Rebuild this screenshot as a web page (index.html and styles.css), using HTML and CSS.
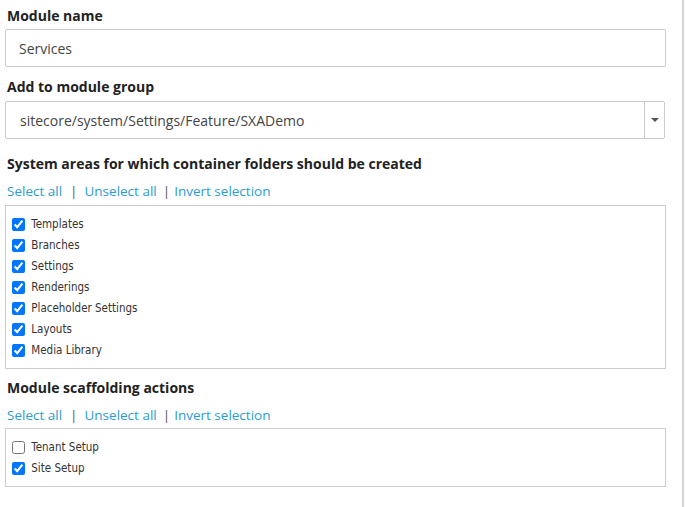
FILE: index.html
```html
<!DOCTYPE html>
<html lang="en">
<head>
    <meta charset="UTF-8">
    <meta name="viewport" content="width=device-width, initial-scale=1.0">
    <title>Create module</title>
    <link rel="stylesheet" href="styles.css">
</head>
<body>
    <div class="page">
        <div class="form">
            <label class="field-label" for="module_name">Module name</label>
            <input id="module_name" class="text-input" type="text" value="Services">

            <label class="field-label label-gap" for="module_group">Add to module group</label>
            <div class="combo">
                <div id="module_group" class="combo-value">sitecore/system/Settings/Feature/SXADemo</div>
                <div class="combo-btn"><span class="caret"></span></div>
            </div>

            <div class="field-label section-gap">System areas for which container folders should be created</div>
            <div class="links">
                <a href="#">Select all</a><span class="sep">|</span><a href="#">Unselect all</a><span class="sep sep-last">|</span><a href="#">Invert selection</a>
            </div>
            <div class="check-list">
                <label class="check-row"><input type="checkbox" checked> Templates</label>
                <label class="check-row"><input type="checkbox" checked> Branches</label>
                <label class="check-row"><input type="checkbox" checked> Settings</label>
                <label class="check-row"><input type="checkbox" checked> Renderings</label>
                <label class="check-row"><input type="checkbox" checked> Placeholder Settings</label>
                <label class="check-row"><input type="checkbox" checked> Layouts</label>
                <label class="check-row"><input type="checkbox" checked> Media Library</label>
            </div>

            <div class="field-label section-gap2">Module scaffolding actions</div>
            <div class="links">
                <a href="#">Select all</a><span class="sep">|</span><a href="#">Unselect all</a><span class="sep sep-last">|</span><a href="#">Invert selection</a>
            </div>
            <div class="check-list list-small">
                <label class="check-row"><input type="checkbox"> Tenant Setup</label>
                <label class="check-row"><input type="checkbox" checked> Site Setup</label>
            </div>
        </div>
    </div>
</body>
</html>
```

FILE: styles.css
```css
body {
    margin: 0;
    font-family: "Open Sans", Arial, sans-serif;
    font-size: 14px;
    color: #333;
    background: #fff;
}

.page {
    width: 684px;
    min-height: 100vh;
    border-right: 2px solid #d4d4d4;
    box-sizing: border-box;
}

.form {
    padding: 6px 16px 0 5px;
}

.field-label {
    display: block;
    padding-left: 2px;
    font-weight: bold;
    font-size: 14px;
    line-height: 20px;
    color: #222;
    margin-bottom: 3px;
}

.label-gap {
    margin-top: 10px;
    margin-bottom: 4px;
}

.section-gap {
    margin-top: 15px;
    margin-bottom: 7px;
}

.section-gap2 {
    margin-top: 9px;
    margin-bottom: 7px;
}

.text-input {
    display: block;
    width: 100%;
    height: 38px;
    box-sizing: border-box;
    margin: 0;
    padding: 0 13px;
    border: 1px solid #ccc;
    border-radius: 2px;
    font-family: "Open Sans", Arial, sans-serif;
    font-size: 14px;
    color: #444;
    outline: none;
}

.combo {
    display: flex;
    height: 38px;
    width: 660px;
    box-sizing: border-box;
    border: 1px solid #ccc;
    border-radius: 2px;
}

.combo-value {
    flex: 1;
    display: flex;
    align-items: center;
    padding: 0 14px;
    color: #444;
}

.combo-btn {
    width: 19px;
    border-left: 1px solid #ccc;
    display: flex;
    align-items: center;
    justify-content: center;
}

.caret {
    width: 0;
    height: 0;
    border-left: 4px solid transparent;
    border-right: 4px solid transparent;
    border-top: 4px solid #555;
}

.links {
    padding-left: 2px;
    line-height: 20px;
    font-size: 13.5px;
    margin-bottom: 4px;
}

.links a {
    color: #2b9ccf;
    text-decoration: none;
}

.links .sep {
    color: #555;
    margin: 0 7px 0 8px;
}

.links .sep-last {
    margin: 0 4px 0 6px;
}

.check-list {
    border: 1px solid #ccc;
    padding: 7px 6px 8px;
}

.list-small {
    margin-top: -1px;
}

.check-row {
    display: flex;
    align-items: center;
    height: 21px;
    font-family: Tahoma, "DejaVu Sans Condensed", sans-serif;
    font-size: 11.5px;
    color: #333;
    white-space: pre;
}

.check-row input {
    margin: 1px 3px 0 0;
    width: 13px;
    height: 13px;
}
```
